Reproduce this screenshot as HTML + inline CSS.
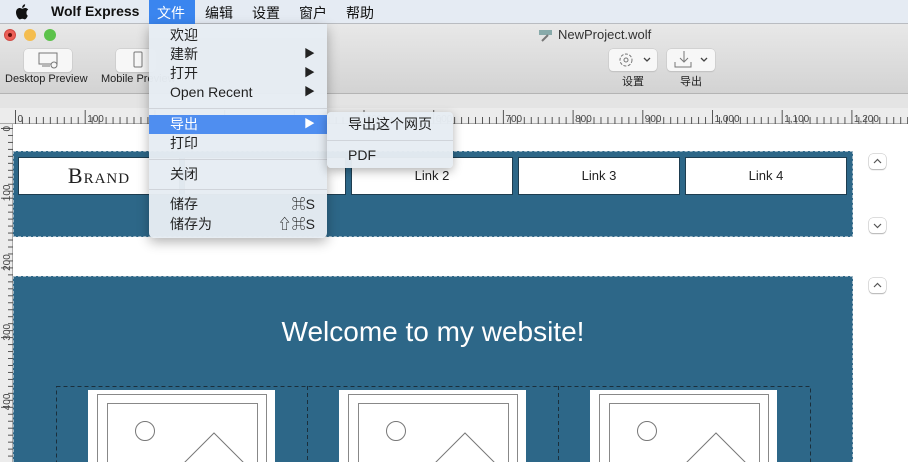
<!DOCTYPE html>
<html><head><meta charset="utf-8"><style>
*{margin:0;padding:0;box-sizing:border-box}
html,body{width:908px;height:462px;overflow:hidden}
body{position:relative;background:#fff;font-family:"Liberation Sans","Noto Sans CJK SC",sans-serif;font-size:13px;color:#222}
.a{position:absolute}
#mb{left:0;top:0;width:908px;height:24px;background:#e5ebf3;border-bottom:1px solid #b9bcc1}
#mb span{position:absolute;top:3px;font-size:14px;color:#111}
#tb{left:0;top:24px;width:908px;height:70px;background:linear-gradient(#e8e8e8,#d3d3d3);border-bottom:1px solid #b4b4b4}
#strip{left:0;top:94px;width:908px;height:14px;background:#e4e4e4}
#hr{left:0;top:108px;width:908px;height:16px;background:#ececec;border-bottom:1px solid #aaa}
#vr{left:0;top:124px;width:13px;height:338px;background:#ececec;border-right:1px solid #aaa}
.dot{width:12px;height:12px;border-radius:50%;top:29px}
.btn{background:#f7f7f7;border-radius:4px;box-shadow:0 0 0 .5px #c4c4c4,0 1px 1px #bbb}
.lbl{font-size:11px;color:#222}
.band{background:#2d6788;outline:1px dashed #9fb6c4;outline-offset:-1px}
.lk{background:#fff;top:157px;height:38px;border:1px solid #1e3d50;text-align:center;line-height:36px;font-size:13px;color:#222}
.arr{width:17px;height:15px;border-radius:4px;background:#fff;box-shadow:0 0 0 .5px #bbb,0 1px 1px #aaa}
#menu{left:149px;top:24px;width:178px;height:214px;background:rgba(230,236,243,.97);border-radius:0 0 5px 5px;box-shadow:0 4px 12px rgba(0,0,0,.3)}
.mi{position:absolute;left:0;width:178px;height:19px;font-size:14px;line-height:19px;padding-left:21px}
.mi b{position:absolute;right:12px;font-weight:normal;font-size:11px}
.sep{position:absolute;left:0;width:178px;height:1px;background:#d0d4da}
#sub{left:327px;top:112px;width:126px;height:56px;background:rgba(230,236,243,.97);border-radius:4px;box-shadow:0 3px 10px rgba(0,0,0,.3)}
</style></head><body>
<div id="mb" class="a">
<svg class="a" style="left:15px;top:4px" width="14" height="16" viewBox="0 0 14 16"><path d="M11.5 8.5c0-2 1.6-2.8 1.7-2.9-1-1.4-2.4-1.6-2.9-1.6-1.2-.1-2.4.7-3 .7s-1.6-.7-2.6-.7C3.3 4 1 5.1 1 8.4c0 3.3 2.4 7 3.9 7 .8 0 1.3-.6 2.4-.6s1.4.6 2.4.6c1.4 0 2.8-2.9 3.1-3.8-1.4-.6-1.3-2.4-1.3-3.1zM9.3 2.7C9.9 2 10.2 1.1 10.1.3 9.3.3 8.4.8 7.9 1.5 7.4 2.1 7 3 7.1 3.8 8 3.8 8.8 3.4 9.3 2.7z" fill="#111"/></svg>
<span style="left:51px;font-weight:bold">Wolf Express</span>
<div class="a" style="left:149px;top:0;width:46px;height:24px;background:#3a85ef"></div>
<span style="left:157px;color:#fff">文件</span>
<span style="left:205px">编辑</span><span style="left:252px">设置</span><span style="left:299px">窗户</span><span style="left:346px">帮助</span>
</div>
<div id="tb" class="a"></div>
<div class="a dot" style="left:4px;background:#ec5f57;border:1px solid #d14a43"><div class="a" style="left:3px;top:3px;width:4px;height:4px;border-radius:50%;background:#6a100c"></div></div>
<div class="a dot" style="left:24px;background:#f4bd4f"></div>
<div class="a dot" style="left:44px;background:#5cc24b"></div>
<div class="a btn" style="left:24px;top:49px;width:48px;height:23px"></div>
<svg class="a" style="left:38px;top:52px" width="22" height="17"><rect x="1" y="1" width="18" height="11" fill="none" stroke="#777"/><circle cx="16" cy="13" r="3" fill="#f7f7f7" stroke="#777"/><path d="M4 14h8" stroke="#777"/></svg>
<div class="a lbl" style="left:5px;top:73px">Desktop Preview</div>
<div class="a btn" style="left:116px;top:49px;width:40px;height:23px"></div>
<svg class="a" style="left:133px;top:51px" width="10" height="18"><rect x="1" y="1" width="8" height="15" rx="1" fill="none" stroke="#777"/></svg>
<div class="a lbl" style="left:101px;top:73px">Mobile Preview</div>
<svg class="a" style="left:538px;top:28px" width="16" height="14"><rect x="1" y="2" width="13" height="5" fill="#8aa"/><path d="M4 13l6-6" stroke="#777" stroke-width="2"/></svg>
<div class="a" style="left:558px;top:27px;font-size:13px;color:#333">NewProject.wolf</div>
<div class="a btn" style="left:609px;top:49px;width:48px;height:22px"></div>
<svg class="a" style="left:615px;top:51px" width="40" height="18"><circle cx="11" cy="9" r="6" fill="none" stroke="#777" stroke-dasharray="3 1.5"/><circle cx="11" cy="9" r="2" fill="none" stroke="#777"/><path d="M29 7l3 3 3-3" fill="none" stroke="#444" stroke-width="1.3"/></svg>
<div class="a lbl" style="left:622px;top:73px">设置</div>
<div class="a btn" style="left:667px;top:49px;width:48px;height:22px"></div>
<svg class="a" style="left:672px;top:51px" width="40" height="18"><path d="M12 0v10M8 7l4 4 4-4M3 11v5h16v-5" fill="none" stroke="#777"/><path d="M29 7l3 3 3-3" fill="none" stroke="#444" stroke-width="1.3"/></svg>
<div class="a lbl" style="left:680px;top:73px">导出</div>
<div id="strip" class="a"></div>
<div id="hr" class="a"></div>
<svg class="a" style="left:0;top:108px" width="908" height="16" id="hrs"></svg>
<div id="vr" class="a"></div>
<svg class="a" style="left:0;top:124px" width="13" height="338" id="vrs"></svg>
<div class="a band" style="left:13px;top:151px;width:840px;height:86px"></div>
<div class="a lk" style="left:18px;width:162px;font-family:'Liberation Serif',serif;font-size:22px;font-variant:small-caps;letter-spacing:1px">Brand</div>
<div class="a lk" style="left:184px;width:162px"></div>
<div class="a lk" style="left:351px;width:162px">Link 2</div>
<div class="a lk" style="left:518px;width:162px">Link 3</div>
<div class="a lk" style="left:685px;width:162px">Link 4</div>
<div class="a arr" style="left:869px;top:154px"><svg width="17" height="15"><path d="M5 9l3.5-3.5L12 9" fill="none" stroke="#555" stroke-width="1.2"/></svg></div>
<div class="a arr" style="left:869px;top:218px"><svg width="17" height="15"><path d="M5 6l3.5 3.5L12 6" fill="none" stroke="#555" stroke-width="1.2"/></svg></div>
<div class="a arr" style="left:869px;top:278px"><svg width="17" height="15"><path d="M5 9l3.5-3.5L12 9" fill="none" stroke="#555" stroke-width="1.2"/></svg></div>
<div class="a band" style="left:13px;top:276px;width:840px;height:186px;outline:none;border-top:1px dashed #9fb6c4;border-left:1px dashed #9fb6c4;border-right:1px dashed #9fb6c4"></div>
<div class="a" style="left:13px;top:316px;width:840px;text-align:center;color:#fff;font-size:28px;font-weight:300">Welcome to my website!</div>
<svg class="a" style="left:0;top:380px" width="908" height="82">
<rect x="56.5" y="6.5" width="754" height="90" fill="none" stroke="#1a2f3c" stroke-dasharray="4 3"/>
<path d="M307.5 6v80M558.5 6v80" stroke="#1a2f3c" stroke-dasharray="4 3"/>
<g id="c"><rect x="88" y="10" width="187" height="80" fill="#fff"/><rect x="97.5" y="14.5" width="169" height="80" fill="none" stroke="#888"/><rect x="107.5" y="23.5" width="150" height="80" fill="none" stroke="#888"/><circle cx="145" cy="51" r="9.5" fill="none" stroke="#777"/><path d="M184 83l30-30 30 30" fill="none" stroke="#777"/></g>
<use href="#c" x="251"/><use href="#c" x="502"/>
</svg>
<div id="menu" class="a">
<div class="mi" style="top:2px">欢迎</div>
<div class="mi" style="top:21px">建新<b>▶</b></div>
<div class="mi" style="top:40px">打开<b>▶</b></div>
<div class="mi" style="top:59px">Open Recent<b>▶</b></div>
<div class="sep" style="top:84px"></div>
<div class="mi" style="top:91px;background:#4f8ef0;color:#fff">导出<b>▶</b></div>
<div class="mi" style="top:110px">打印</div>
<div class="sep" style="top:135px"></div>
<div class="mi" style="top:141px">关闭</div>
<div class="sep" style="top:165px"></div>
<div class="mi" style="top:171px">储存<b style="font-size:14px">⌘S</b></div>
<div class="mi" style="top:191px">储存为<b style="font-size:14px">⇧⌘S</b></div>
</div>
<div id="sub" class="a">
<div class="mi" style="top:3px;width:126px;padding-left:21px">导出这个网页</div>
<div class="sep" style="top:28px;width:126px"></div>
<div class="mi" style="top:34px;width:126px;padding-left:21px">PDF</div>
</div>
<script>
var h='',s=0.697;
for(var u=0;u<=1280;u+=10){var x=15+u*s+.5,big=u%100==0;h+='<path d="M'+x+' '+(big?2:9)+'V16" stroke="#555"/>';if(big)h+='<text x="'+(x+2)+'" y="14" font-size="10" fill="#444" font-family="Liberation Sans">'+(u>=1000?u.toLocaleString('en-US'):u)+'</text>';}
document.getElementById('hrs').innerHTML=h;
h='';
for(var u=0;u<=480;u+=10){var y=4+u*s+.5,big=u%100==0;h+='<path d="M'+(big?1:8)+' '+y+'H13" stroke="#555"/>';if(big)h+='<text transform="translate(10,'+(y+3)+') rotate(-90)" font-size="10" fill="#444" font-family="Liberation Sans">'+u+'</text>';}
document.getElementById('vrs').innerHTML=h;
</script>
</body></html>
